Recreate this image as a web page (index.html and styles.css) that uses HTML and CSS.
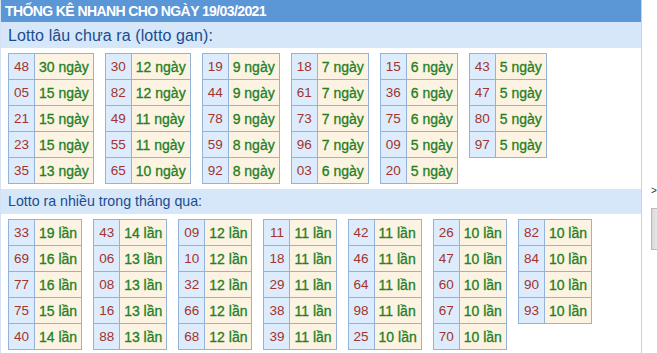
FILE: index.html
```html
<!DOCTYPE html>
<html lang="vi">
<head>
<meta charset="utf-8">
<title>Thống kê nhanh</title>
<link rel="stylesheet" href="styles.css">
</head>
<body>
<div class="page">
  <div class="panel">
    <div class="title">THỐNG KÊ NHANH CHO NGÀY 19/03/2021</div>
    <div class="sub sub-first">Lotto lâu chưa ra (lotto gan):</div>
    <div class="grid">
      <table><tr><td class="n">48</td><td class="d">30 ngày</td></tr><tr><td class="n">05</td><td class="d">15 ngày</td></tr><tr><td class="n">21</td><td class="d">15 ngày</td></tr><tr><td class="n">23</td><td class="d">15 ngày</td></tr><tr><td class="n">35</td><td class="d">13 ngày</td></tr></table>
      <table><tr><td class="n">30</td><td class="d">12 ngày</td></tr><tr><td class="n">82</td><td class="d">12 ngày</td></tr><tr><td class="n">49</td><td class="d">11 ngày</td></tr><tr><td class="n">55</td><td class="d">11 ngày</td></tr><tr><td class="n">65</td><td class="d">10 ngày</td></tr></table>
      <table><tr><td class="n">19</td><td class="d">9 ngày</td></tr><tr><td class="n">44</td><td class="d">9 ngày</td></tr><tr><td class="n">78</td><td class="d">9 ngày</td></tr><tr><td class="n">59</td><td class="d">8 ngày</td></tr><tr><td class="n">92</td><td class="d">8 ngày</td></tr></table>
      <table><tr><td class="n">18</td><td class="d">7 ngày</td></tr><tr><td class="n">61</td><td class="d">7 ngày</td></tr><tr><td class="n">73</td><td class="d">7 ngày</td></tr><tr><td class="n">96</td><td class="d">7 ngày</td></tr><tr><td class="n">03</td><td class="d">6 ngày</td></tr></table>
      <table><tr><td class="n">15</td><td class="d">6 ngày</td></tr><tr><td class="n">36</td><td class="d">6 ngày</td></tr><tr><td class="n">75</td><td class="d">6 ngày</td></tr><tr><td class="n">09</td><td class="d">5 ngày</td></tr><tr><td class="n">20</td><td class="d">5 ngày</td></tr></table>
      <table><tr><td class="n">43</td><td class="d">5 ngày</td></tr><tr><td class="n">47</td><td class="d">5 ngày</td></tr><tr><td class="n">80</td><td class="d">5 ngày</td></tr><tr><td class="n">97</td><td class="d">5 ngày</td></tr></table>
    </div>
    <div class="sub sub-second">Lotto ra nhiều trong tháng qua:</div>
    <div class="grid">
      <table><tr><td class="n">33</td><td class="d">19 lần</td></tr><tr><td class="n">69</td><td class="d">16 lần</td></tr><tr><td class="n">77</td><td class="d">16 lần</td></tr><tr><td class="n">75</td><td class="d">15 lần</td></tr><tr><td class="n">40</td><td class="d">14 lần</td></tr></table>
      <table><tr><td class="n">43</td><td class="d">14 lần</td></tr><tr><td class="n">06</td><td class="d">13 lần</td></tr><tr><td class="n">08</td><td class="d">13 lần</td></tr><tr><td class="n">16</td><td class="d">13 lần</td></tr><tr><td class="n">88</td><td class="d">13 lần</td></tr></table>
      <table><tr><td class="n">09</td><td class="d">12 lần</td></tr><tr><td class="n">10</td><td class="d">12 lần</td></tr><tr><td class="n">32</td><td class="d">12 lần</td></tr><tr><td class="n">66</td><td class="d">12 lần</td></tr><tr><td class="n">68</td><td class="d">12 lần</td></tr></table>
      <table><tr><td class="n">11</td><td class="d">11 lần</td></tr><tr><td class="n">18</td><td class="d">11 lần</td></tr><tr><td class="n">29</td><td class="d">11 lần</td></tr><tr><td class="n">38</td><td class="d">11 lần</td></tr><tr><td class="n">39</td><td class="d">11 lần</td></tr></table>
      <table><tr><td class="n">42</td><td class="d">11 lần</td></tr><tr><td class="n">46</td><td class="d">11 lần</td></tr><tr><td class="n">64</td><td class="d">11 lần</td></tr><tr><td class="n">98</td><td class="d">11 lần</td></tr><tr><td class="n">25</td><td class="d">10 lần</td></tr></table>
      <table><tr><td class="n">26</td><td class="d">10 lần</td></tr><tr><td class="n">47</td><td class="d">10 lần</td></tr><tr><td class="n">60</td><td class="d">10 lần</td></tr><tr><td class="n">67</td><td class="d">10 lần</td></tr><tr><td class="n">70</td><td class="d">10 lần</td></tr></table>
      <table><tr><td class="n">82</td><td class="d">10 lần</td></tr><tr><td class="n">84</td><td class="d">10 lần</td></tr><tr><td class="n">90</td><td class="d">10 lần</td></tr><tr><td class="n">93</td><td class="d">10 lần</td></tr></table>
    </div>
  </div>
  <div class="side">
    <div class="arrow">&gt;</div>
    <div class="box"></div>
  </div>
</div>
</body>
</html>
```
FILE: styles.css
```css
html, body {
  margin: 0;
  padding: 0;
  background: #ffffff;
  overflow: hidden;
}

body {
  font-family: "Liberation Sans", Arial, sans-serif;
}

.page {
  display: flex;
  align-items: flex-start;
  height: 353px;
}

.panel {
  width: 640px;
  height: 353px;
  border-left: 1px solid #d3e1f0;
  border-right: 1px solid #c2d3e6;
  overflow: hidden;
  flex: none;
}

.title {
  height: 22px;
  line-height: 23px;
  background: #5b96d6;
  color: #ffffff;
  font-weight: bold;
  font-size: 14px;
  padding-left: 4px;
  letter-spacing: -0.6px;
}

.sub {
  background: #d5e7f9;
  color: #1c4c8e;
  padding-left: 7px;
}

.sub-first {
  height: 26px;
  line-height: 27px;
  font-size: 16px;
  letter-spacing: 0.1px;
}

.sub-second {
  height: 25px;
  line-height: 25px;
  font-size: 14.2px;
}

.grid {
  display: flex;
  align-items: flex-start;
  gap: 11px;
  padding: 5px 0 5px 7px;
}

table {
  border-collapse: collapse;
  flex: none;
}

td {
  border: 1px solid #93b3d9;
  height: 25px;
  padding: 0;
  white-space: nowrap;
}

td.n {
  width: 25px;
  text-align: center;
  background: #dcecfc;
  color: #a3332c;
  font-size: 13.5px;
}

td.d {
  padding: 0 4px;
  background: #fdf3e3;
  color: #23801f;
  font-size: 14px;
  -webkit-text-stroke: 0.3px #23801f;
}

.side {
  display: flex;
  flex-direction: column;
  padding-top: 186px;
  padding-left: 9px;
}

.arrow {
  font-size: 10px;
  line-height: 10px;
  color: #333333;
}

.box {
  margin-top: 12px;
  width: 10px;
  height: 40px;
  border: 1px solid #b9b9b9;
  background: linear-gradient(90deg, #d8d8d8, #f7f7f7);
}
```
